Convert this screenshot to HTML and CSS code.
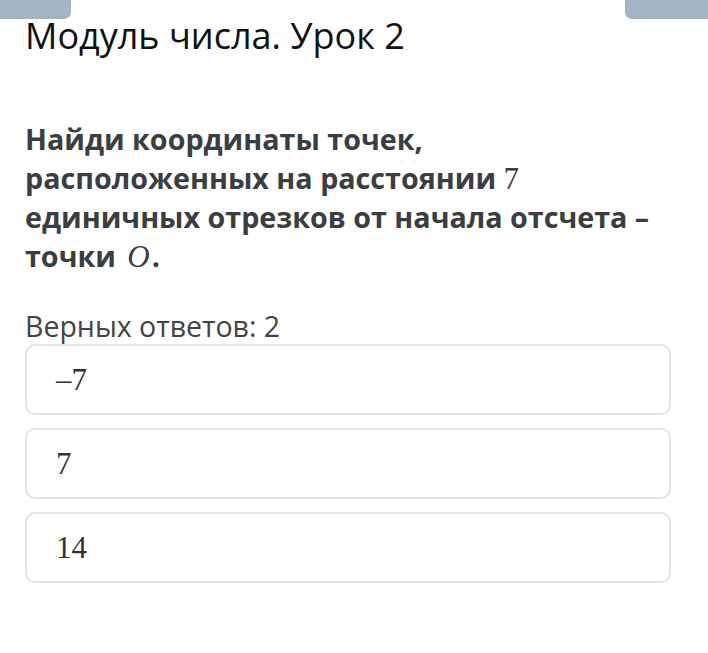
FILE: index.html
```html
<!DOCTYPE html>
<html lang="ru">
<head>
<meta charset="utf-8">
<link rel="stylesheet" href="styles.css">
</head>
<body>
<div class="topbar">
  <div class="tab tab-left"></div>
  <div class="tab tab-right"></div>
</div>
<main class="page">
  <h1 class="title">Модуль числа. Урок 2</h1>
  <p class="question">Найди координаты точек, расположенных на расстоянии <span class="math">7</span> единичных отрезков от начала отсчета – точки <span class="math italic">O</span>.</p>
  <p class="hint">Верных ответов: 2</p>
  <div class="options">
    <div class="option"><span class="math">–7</span></div>
    <div class="option"><span class="math">7</span></div>
    <div class="option"><span class="math">14</span></div>
  </div>
</main>
</body>
</html>
```
FILE: styles.css
```css
html, body {
  margin: 0;
  padding: 0;
  background: #ffffff;
}
body {
  font-family: "Open Sans", "Noto Sans", sans-serif;
  color: #3a3d42;
}
.topbar {
  display: flex;
  justify-content: space-between;
  height: 19px;
}
.tab {
  background: #a3b4c2;
  height: 19px;
}
.tab-left {
  width: 71px;
  border-bottom-right-radius: 7px;
}
.tab-right {
  width: 83px;
  border-bottom-left-radius: 7px;
}
.page {
  padding: 0 37px 0 25px;
}
.title {
  margin: 0;
  font-weight: 400;
  font-size: 36px;
  line-height: 34px;
  color: #111;
}
.question {
  margin: 66px 16px 0 0;
  font-weight: 700;
  font-size: 28.7px;
  line-height: 39px;
  color: #3a3d42;
}
.math {
  font-family: "Liberation Serif", "DejaVu Serif", serif;
  font-weight: 400;
  font-size: 31px;
  line-height: 1;
}
.italic {
  font-style: italic;
  padding: 0 2px 0 4px;
}
.hint {
  margin: 34px 0 0 0;
  font-size: 28.5px;
  line-height: 34px;
  color: #444;
}
.options {
  display: flex;
  flex-direction: column;
  gap: 13px;
  margin-top: 1px;
}
.option {
  box-sizing: border-box;
  height: 71px;
  border: 2px solid #e3e3e3;
  border-radius: 10px;
  display: flex;
  align-items: center;
  padding-left: 29px;
  color: #333;
}
.option .math {
  font-size: 31px;
}
```
